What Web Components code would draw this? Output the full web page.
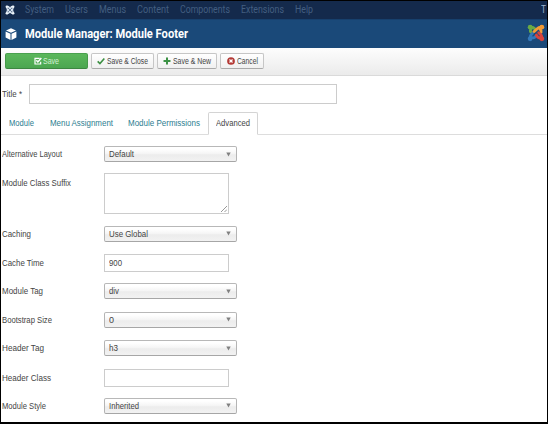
<!DOCTYPE html>
<html lang="en"><head><meta charset="utf-8"><title>Module Manager: Module Footer</title>
<style>html,body{margin:0;background:#000}body{width:548px;height:424px;overflow:hidden}</style></head>
<body><module-page></module-page>
<script>
const define=(name,html,after)=>customElements.define(name,class extends HTMLElement{
  connectedCallback(){
    if(this.shadowRoot)return;
    this.attachShadow({mode:'open'}).innerHTML=html(this);
    if(after)after(this);
  }
});

// One line of text, condensed or widened so that it spans the width in "w".
define('fit-text',()=>`<style>:host{display:block;white-space:nowrap;line-height:1.2;flex:none}span{display:inline-block;transform-origin:0 50%}</style><span><slot></slot></span>`,el=>{
  const w=+el.getAttribute('w'),s=el.shadowRoot.querySelector('span');
  const natural=s.getBoundingClientRect().width;
  s.style.transform='scaleX('+(w/natural)+')';
  el.style.width=w+'px';
});

const icons={
  joomla:'<g fill="none" stroke="#dbe6f2" stroke-width="2" stroke-linecap="round"><path d="M2.2 2.2Q3.8 1.6 5 3L9.5 7.5M9.8 2.2Q8.2 1.6 7 3L2.5 7.5M2.5 4.5L7 9Q8.2 10.4 9.8 9.8M9.5 4.5L5 9Q3.8 10.4 2.2 9.8"/></g><g fill="#eef4fa"><circle cx="2.2" cy="2.2" r="1.5"/><circle cx="9.8" cy="2.2" r="1.5"/><circle cx="2.2" cy="9.8" r="1.5"/><circle cx="9.8" cy="9.8" r="1.5"/></g><path d="M6 4.6L7.4 6L6 7.4L4.6 6Z" fill="#40587a"/>',
  cube:'<g fill="#fff"><path d="M6 .2L11 2.4L6 4.8L1 2.4Z"/><path d="M.6 3.5L5.5 5.8V11.9L.6 9.5Z"/><path d="M11.4 3.5L6.5 5.8V11.9L11.4 9.5Z"/></g>',
  edit:'<path d="M8.5 2H1.5V10.5H10V7" fill="none" stroke="#fff" stroke-width="1.8"/><path d="M3.5 5L5.8 7.5L11 1.5" fill="none" stroke="#fff" stroke-width="2.2"/>',
  check:'<path d="M1 6.5L4.4 9.8L11 2.3" fill="none" stroke="#3c8f43" stroke-width="2.4"/>',
  plus:'<path d="M6 .8V11.2M.8 6H11.2" fill="none" stroke="#3c9245" stroke-width="3"/>',
  cancel:'<circle cx="6" cy="6" r="5.8" fill="#b43a36"/><path d="M3.7 3.7L8.3 8.3M8.3 3.7L3.7 8.3" stroke="#fff" stroke-width="1.8"/>',
  brand:'<g fill="none" stroke-width="1.9" stroke-linecap="round"><path d="M2.1 2.1Q4 1.8 5 3L5.6 3.6M2.6 5.4Q1.8 4.4 2.8 3.2" stroke="#69aa46"/><path d="M9.9 2.1Q8 1.8 7 3L4.6 5.2M8.8 3.6Q9.8 4.4 9.4 5.4" stroke="#f39b35"/><path d="M2.1 9.9Q1.8 8 3 7L3.6 6.4M3.8 9.2Q5 9.4 5.6 8.4" stroke="#3478b9"/><path d="M9.9 9.9Q10.2 8 9 7L7.8 5.8M6.2 7.4L7.2 8.8Q8.4 9.8 9 8.8" stroke="#d8433c"/></g><circle cx="2.1" cy="2.1" r="1.6" fill="#69aa46"/><circle cx="9.9" cy="2.1" r="1.6" fill="#f39b35"/><circle cx="2.1" cy="9.9" r="1.6" fill="#3478b9"/><circle cx="9.9" cy="9.9" r="1.6" fill="#d8433c"/>'
};
define('ui-icon',el=>`<style>:host{display:block;flex:none}svg{display:block}</style><svg width="${el.getAttribute('size')}" height="${el.getAttribute('size')}" viewBox="0 0 12 12">${icons[el.getAttribute('name')]}</svg>`);

define('menu-bar',()=>`<style>:host{display:flex;align-items:center;height:18px;box-sizing:border-box;padding:0 1px 1px 4px;background:#142a4c;color:#435e80;font:10px Roboto,sans-serif}
nav{display:flex;gap:11px;margin-left:10px}.user{margin-left:auto;color:#9eb4d0}</style>
<ui-icon name="joomla" size="10"></ui-icon><nav><fit-text w="29">System</fit-text><fit-text w="23">Users</fit-text><fit-text w="27">Menus</fit-text><fit-text w="32">Content</fit-text><fit-text w="50">Components</fit-text><fit-text w="43">Extensions</fit-text><fit-text w="18">Help</fit-text></nav><fit-text class="user" w="5">T</fit-text>`);

define('page-header',()=>`<style>:host{display:flex;align-items:center;height:29px;box-sizing:border-box;padding:0 2px 0 4px;background:#1a4979;color:#fff;font:bold 12px Roboto,sans-serif;border-top:1px solid #17406d}
.t{margin-left:8px}.b{margin:-3px 0 0 auto}</style><ui-icon name="cube" size="12"></ui-icon><fit-text class="t" w="163">Module Manager: Module Footer</fit-text><ui-icon class="b" name="brand" size="18"></ui-icon>`);

define('tool-button',el=>`<style>:host{display:flex;align-items:center;justify-content:center;gap:${el.getAttribute('gap')||2}px;height:16px;box-sizing:border-box;border:1px solid #c6c6c6;border-bottom-color:#aaa;border-radius:2px;background:linear-gradient(#fff,#f0f0f0);color:#444;font:8.5px "Liberation Sans",sans-serif}
:host([primary]){background:linear-gradient(#5bb75b,#4ba650);border-color:#4aa04e #469a4a #3c8740;color:#d4efd2}</style><ui-icon name="${el.getAttribute('icon')}" size="${el.getAttribute('size')||8}"></ui-icon><slot></slot>`);

define('tool-bar',()=>`<style>:host{display:flex;gap:3px;height:28px;box-sizing:border-box;padding:5px 0 0 4px;background:linear-gradient(#fdfdfd,#ebebeb);border-bottom:1px solid #dadada}</style>
<tool-button style="width:83px" icon="edit" primary gap="1"><fit-text w="16">Save</fit-text></tool-button>
<tool-button style="width:63px" icon="check"><fit-text w="41">Save &amp; Close</fit-text></tool-button>
<tool-button style="width:60px" icon="plus"><fit-text w="38">Save &amp; New</fit-text></tool-button>
<tool-button style="width:44px" icon="cancel"><fit-text w="21">Cancel</fit-text></tool-button>`);

define('title-field',()=>`<style>:host{display:flex;align-items:center;height:36px;box-sizing:border-box;padding:0 0 1px 1px;color:#444}
.box{width:308px;height:20px;box-sizing:border-box;border:1px solid #ccc;background:#fff;margin-left:7px}fit-text{padding-top:1px}</style><fit-text w="20">Title *</fit-text><div class="box"></div>`);

define('tab-strip',()=>`<style>:host{display:flex;align-items:center;height:23px;box-sizing:border-box;border-bottom:1px solid #ddd;padding-left:8px;color:#2c7d8f}
fit-text{padding-top:1px}.p{margin-left:16px}.q{margin-left:15px}.active{display:flex;align-items:center;height:23px;box-sizing:border-box;border:1px solid #d4d4d4;border-bottom-color:#fff;border-radius:2px 2px 0 0;background:#fff;color:#444;margin:0 0 -1px 8px;padding:0 7px}.active fit-text{padding:0}</style>
<fit-text w="25">Module</fit-text><fit-text class="p" w="63">Menu Assignment</fit-text><fit-text class="q" w="72">Module Permissions</fit-text><div class="active"><fit-text w="34">Advanced</fit-text></div>`);

define('form-row',el=>{
  const k=el.getAttribute('kind'),v=el.getAttribute('value')||'';
  return `<style>:host{display:grid;grid-template-columns:102px auto;align-items:center;justify-content:start;padding-left:1px;color:#444}
.label{padding-top:1px}:host([kind=area]) .label{align-self:start;margin-top:4px}
.box{display:flex;align-items:center;box-sizing:border-box;padding-left:4px;border:1px solid #ccc;background:#fff}
.input{width:125px;height:18px}.area{width:125px;height:41px;align-items:flex-end;justify-content:flex-end;padding:0 1px 1px 0}
.select{width:133px;height:16px;padding-right:5px;justify-content:space-between;border-color:#b8b8b8 #b4b4b4 #a6a6a6;border-radius:2px;background:linear-gradient(#fff 15%,#f4f4f4 50%,#ececec 55%,#f2f2f2)}
.select fit-text,.input fit-text{padding-top:1px}
svg{display:block}</style><fit-text class="label" w="${el.getAttribute('w')}">${el.getAttribute('label')}</fit-text>
<div class="box ${k}">${v?`<fit-text w="${el.getAttribute('vw')}">${v}</fit-text>`:''}${k==='select'?'<svg width="5" height="5"><path d="M.3 .5H4.7L2.5 4.5Z" fill="#808080"/></svg>':''}${k==='area'?'<svg width="6" height="6"><path d="M0 6L6 0M3.5 6L6 3.5" stroke="#999"/></svg>':''}</div>`;
});

define('module-form',()=>`<style>:host{display:grid;grid-template-rows:38px 41px 39px 19px 38px 19px 38px 21px 35px}
</style>
<form-row label="Alternative Layout" w="60" kind="select" value="Default" vw="25"></form-row>
<form-row label="Module Class Suffix" w="69" kind="area"></form-row>
<form-row label="Caching" w="29" kind="select" value="Use Global" vw="39"></form-row>
<form-row label="Cache Time" w="42" kind="input" value="900" vw="13"></form-row>
<form-row label="Module Tag" w="41" kind="select" value="div" vw="10"></form-row>
<form-row label="Bootstrap Size" w="50" kind="select" value="0" vw="5"></form-row>
<form-row label="Header Tag" w="42" kind="select" value="h3" vw="9"></form-row>
<form-row label="Header Class" w="49" kind="input"></form-row>
<form-row label="Module Style" w="44" kind="select" value="Inherited" vw="30"></form-row>`);

define('module-page',()=>`<style>:host{display:block;box-sizing:border-box;width:548px;height:424px;padding:1px 1px 2px;background:#000;font:8.8px "Liberation Sans",sans-serif}
main{display:flex;flex-direction:column;height:421px;background:#fff;overflow:hidden}menu-bar,page-header,tool-bar,title-field,tab-strip{flex:none}</style>
<main><menu-bar></menu-bar><page-header></page-header><tool-bar></tool-bar><title-field></title-field><tab-strip></tab-strip><module-form></module-form></main>`);
</script></body></html>
